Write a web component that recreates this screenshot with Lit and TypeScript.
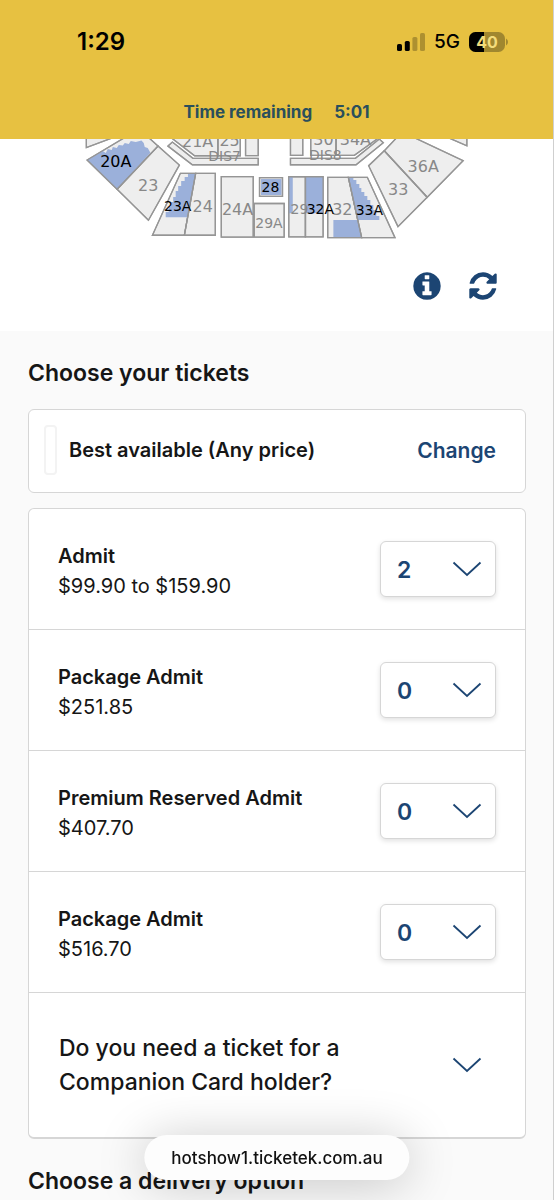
import { LitElement, html, css, svg } from "lit";
import { customElement, property, state } from "lit/decorators.js";

interface TicketType {
  id: string;
  name: string;
  price: string;
  quantity: number;
}

const chevron = html`<svg class="chevron" viewBox="0 0 30 16" aria-hidden="true">
  <path d="M1.5 1.5 15 14 28.5 1.5" fill="none" stroke="currentColor" stroke-width="1.8" />
</svg>`;

@customElement("status-bar")
class StatusBar extends LitElement {
  static styles = css`
    :host {
      display: flex;
      justify-content: space-between;
      align-items: center;
      height: 28px;
      padding: 28px 45px 0 77px;
      color: #000;
    }
    .time {
      font-size: 24px;
      line-height: 28px;
      font-weight: 600;
    }
    .indicators {
      display: flex;
      align-items: center;
      gap: 9px;
      font-size: 19px;
      line-height: 28px;
      font-weight: 500;
    }
    .signal {
      width: 28px;
      height: 18px;
    }
    .battery {
      width: 39px;
      height: 20px;
      font-weight: 700;
    }
  `;

  render() {
    return html`
      <span class="time">1:29</span>
      <span class="indicators">
        <svg class="signal" viewBox="0 0 28 18" aria-label="Signal">
          <rect x="0" y="11" width="5" height="7" rx="1.6" />
          <rect x="7.8" y="8" width="5" height="10" rx="1.6" />
          <rect x="15.4" y="4" width="5" height="14" rx="1.6" opacity=".25" />
          <rect x="23" y="0" width="5" height="18" rx="1.6" opacity=".25" />
        </svg>
        <span>5G</span>
        <svg class="battery" viewBox="0 0 39 20" aria-label="Battery">
          <defs><clipPath id="shell"><rect width="36" height="20" rx="6.5" /></clipPath></defs>
          <g clip-path="url(#shell)">
            <rect width="36" height="20" fill="#a0872f" />
            <rect width="15" height="20" />
          </g>
          <path d="M37 6.500q2 1 2 3.500t-2 3.500z" fill="#a0872f" />
          <text x="18" y="16" text-anchor="middle" font-size="16" fill="#f3dc7c">40</text>
        </svg>
      </span>
    `;
  }
}

@customElement("seat-map")
class SeatMap extends LitElement {
  static styles = css`
    :host {
      display: block;
    }
    .map {
      display: block;
      width: 100%;
      height: 111px;
    }
    .seat {
      fill: #eee;
      stroke: #a0a0a0;
      stroke-width: 1.3;
    }
    .open {
      fill: #9bb0da;
    }
    .edge {
      fill: none;
      stroke: #959595;
      stroke-width: 1.3;
    }
    .label {
      font-family: "DejaVu Sans", sans-serif;
      font-size: 16px;
      fill: #888;
      text-anchor: middle;
    }
    .small {
      font-size: 14px;
    }
    .on {
      fill: #000;
    }
  `;

  private sections = [
    "86.500,138 86.500,147.500 112,138",
    "87.300,160 124,138 149.500,138 158.300,146 117.300,189.300",
    "158.300,146 179.700,165 148.700,220.300 117.300,189.300",
    "168.300,146 172.700,142 193.300,158.300 258.700,158.300 258.700,164.700 192.700,164.700",
    "172,138 195,155.700 218.300,155.700 218.300,138",
    "218.300,138 218.300,155.700 240.700,155.700 240.700,138",
    "246,138 246,155.500 258.700,155.500 258.700,138",
    "180.700,173.300 196,173.300 184.700,235.300 152.700,235.300",
    "196,173.300 215.700,173.300 215.700,235.300 184.700,235.300",
    "221.700,176.500 253.700,176.500 253.700,237.300 221.700,237.300",
    "260,177.500 283,177.500 283,196.300 260,196.300",
    "254.700,203.500 284.700,203.500 284.700,237.300 254.700,237.300",
    "289.300,176.700 306,176.700 306,237 289.300,237",
    "306,176.700 323.700,176.700 323.700,237 306,237",
    "328.300,177.300 349,177.300 362.300,237.700 328.300,237.700",
    "349,177.300 368,177.300 395.700,237.700 362.300,237.700",
    "385,150.700 428,197.300 398.700,226.700 369.300,165.700",
    "397,138 416,138 464,160.700 428,197.300 385,150.700",
    "450,138 467.700,145.700 467.700,138",
    "291,138 291,155.300 303.300,155.300 303.300,138",
    "291,158.300 356,158.300 380,139 384,142.700 356.700,164.700 291,164.700",
    "311.300,138 311.300,155.300 336.700,155.300 336.700,138",
    "336.700,138 336.700,155.300 355,155.300 379,138",
  ];

  private available = [
    "87.300,160 103,151 106,153 108,149 112,150 113,147 117,148 119,145 123,145.500 125,143 129,144 131,141 136,142 141.700,140.500 144,143 145,147 148,148 150.700,152.700 117.300,189.300",
    "188.300,173.300 196,173.300 187.500,217.300 166,217.300 166,212 169,212 169,207 171,207 171,202 173.500,202 173.500,197 176,197 176,191 178.500,191 178.500,186 181.500,186 181.500,181 185,181 185,177 188.300,177",
    "261.500,179 282,179 282,195 261.500,195",
    "289.300,176.700 293.300,176.700 293.300,213.300 289.300,213.300",
    "306.500,176.700 323.700,176.700 323.700,213.300 306.500,213.300",
    "334,220 358.500,220 362.300,237.700 334,237.700",
    "349,177.300 354,177.300 354,180 357,180 357,184 360,184 360,188 362,188 362,192 365,192 365,196 368,196 368,200 371,200 371,205 374,205 374,210 377,210 377,216 380,216 380,220 358.500,220",
  ];

  private labels: [string, number, number, string][] = [
    ["21A", 198, 147, ""],
    ["25", 230, 146, ""],
    ["DIS7", 225, 161, "small"],
    ["30", 324, 145, ""],
    ["34A", 356, 145, ""],
    ["DIS8", 326, 160, "small"],
    ["20A", 116, 166.5, "on"],
    ["23", 148.500, 191, ""],
    ["23A", 178, 211, "on small"],
    ["24", 203, 212, ""],
    ["24A", 238, 215, ""],
    ["28", 271, 192, "on small"],
    ["29A", 269.500, 228, "small"],
    ["29", 300, 214, "small"],
    ["32", 343, 215, ""],
    ["32A", 321, 214, "on small"],
    ["33A", 370, 215, "on small"],
    ["33", 399, 195, ""],
    ["36A", 424, 172, ""],
  ];

  render() {
    return html`
      <svg class="map" viewBox="0 139 554 111" role="img" aria-label="Seat map">
        ${this.sections.map((p) => svg`<polygon class="seat" points=${p} />`)}
        ${this.available.map((p) => svg`<polygon class="open" points=${p} />`)}
        ${this.sections.map((p) => svg`<polygon class="edge" points=${p} />`)}
        ${this.labels.map(
          ([text, x, y, kind]) => svg`<text class="label ${kind}" x=${x} y=${y}>${text}</text>`
        )}
      </svg>
    `;
  }
}

@customElement("ticket-row")
class TicketRow extends LitElement {
  @property({ attribute: false }) ticket!: TicketType;

  static styles = css`
    :host {
      display: flex;
      align-items: center;
      justify-content: space-between;
      padding: 28px 29px;
      border-bottom: 1px solid #d6d6d6;
    }
    .label {
      display: block;
      padding-top: 4px;
      font-size: 20px;
      line-height: 30px;
    }
    .name {
      display: block;
      font-weight: 600;
    }
    .price {
      display: block;
    }
    .picker {
      display: grid;
      align-items: center;
      width: 116px;
      color: #1c4573;
    }
    .quantity {
      grid-area: 1 / 1;
      appearance: none;
      box-sizing: border-box;
      width: 100%;
      height: 56px;
      padding: 2px 16px 0;
      border: 1px solid #d6d6d6;
      border-radius: 6px;
      background: #fff;
      box-shadow: 0 2px 5px rgba(0, 0, 0, 0.12);
      color: inherit;
      font: inherit;
      font-size: 23px;
      font-weight: 600;
    }
    .chevron {
      grid-area: 1 / 1;
      justify-self: end;
      width: 30px;
      height: 16px;
      margin-right: 14px;
      pointer-events: none;
    }
  `;

  render() {
    const { id, name, price, quantity } = this.ticket;
    return html`
      <label class="label" for=${id}>
        <span class="name">${name}</span>
        <span class="price">${price}</span>
      </label>
      <span class="picker">
        <select class="quantity" id=${id}>
          ${[0, 1, 2, 3, 4].map((n) => html`<option ?selected=${n === quantity}>${n}</option>`)}
        </select>
        ${chevron}
      </span>
    `;
  }
}

@customElement("app-root")
class AppRoot extends LitElement {
  @state() private tickets: TicketType[] = [
    { id: "admit", name: "Admit", price: "$99.90 to $159.90", quantity: 2 },
    { id: "package-a", name: "Package Admit", price: "$251.85", quantity: 0 },
    { id: "premium", name: "Premium Reserved Admit", price: "$407.70", quantity: 0 },
    { id: "package-b", name: "Package Admit", price: "$516.70", quantity: 0 },
  ];

  static styles = css`
    :host {
      display: block;
      box-sizing: border-box;
      min-height: 100vh;
      border-right: 1px solid #cfcfcf;
      background: #fafafa;
      color: #161616;
      font-family: Inter, sans-serif;
    }
    .top {
      background: #e7c141;
    }
    .timer {
      display: flex;
      justify-content: center;
      gap: 22px;
      padding: 44px 0 15px;
      color: #2a4f5c;
      font-size: 17px;
      line-height: 24px;
      font-weight: 700;
    }
    .venue {
      background: #fff;
      padding-bottom: 29px;
    }
    .tools {
      display: flex;
      justify-content: flex-end;
      gap: 24px;
      padding: 20px 54px 0 0;
    }
    .tool {
      display: flex;
      padding: 0;
      border: 0;
      background: none;
      color: #1c4573;
    }
    .icon {
      width: 32px;
      height: 32px;
    }
    .content {
      padding: 24px 27px 0 28px;
    }
    .heading {
      margin: 0;
      font-size: 23px;
      line-height: 36px;
      font-weight: 600;
    }
    .card {
      border: 1px solid #d6d6d6;
      border-radius: 6px;
      background: #fff;
    }
    .choice {
      display: flex;
      align-items: center;
      gap: 12px;
      margin: 18px 0 15px;
      padding: 15px 29px 17px 15px;
    }
    .swatch {
      box-sizing: border-box;
      width: 13px;
      height: 50px;
      border: 2px solid #f3f3f3;
      border-radius: 4px;
    }
    .best {
      flex: 1;
      font-size: 20px;
      line-height: 30px;
      font-weight: 600;
    }
    .change {
      padding: 2px 0 0;
      border: 0;
      background: none;
      color: #1c4573;
      font: inherit;
      font-size: 21px;
      line-height: 30px;
      font-weight: 600;
    }
    .list {
      border-bottom-width: 2px;
      margin-bottom: 24px;
    }
    .companion {
      display: flex;
      align-items: center;
      justify-content: space-between;
      box-sizing: border-box;
      width: 100%;
      padding: 38px 43px 38px 30px;
      border: 0;
      background: none;
      color: inherit;
      font: inherit;
      font-size: 23px;
      line-height: 34px;
      font-weight: 500;
      text-align: left;
    }
    .question {
      max-width: 300px;
    }
    .chevron {
      width: 30px;
      height: 16px;
      color: #1c4573;
    }
    .address {
      position: fixed;
      bottom: 20px;
      left: 50%;
      transform: translateX(-50%);
      padding: 8px 27px 7px;
      border-radius: 23px;
      background: #fdfdfd;
      box-shadow: 0 4px 50px rgba(0, 0, 0, 0.22);
      color: #111;
      font-size: 17px;
      line-height: 30px;
      font-weight: 500;
      white-space: nowrap;
    }
  `;

  render() {
    return html`
      <header class="top">
        <status-bar></status-bar>
        <div class="timer"><span>Time remaining</span><span>5:01</span></div>
      </header>
      <section class="venue">
        <seat-map></seat-map>
        <div class="tools">
          <button class="tool" aria-label="Information">
            <svg class="icon" viewBox="0 0 1792 1792" fill="currentColor">
              <path
                d="M1152 1376v-160q0-14-9-23t-23-9h-96v-512q0-14-9-23t-23-9h-320q-14 0-23 9t-9 23v160q0 14 9 23t23 9h96v320h-96q-14 0-23 9t-9 23v160q0 14 9 23t23 9h448q14 0 23-9t9-23zm-128-896v-160q0-14-9-23t-23-9h-192q-14 0-23 9t-9 23v160q0 14 9 23t23 9h192q14 0 23-9t9-23zm640 416q0 209-103 385.500t-279.500 279.500-385.500 103-385.500-103-279.500-279.500-103-385.500 103-385.500 279.500-279.500 385.500-103 385.500 103 279.500 279.500 103 385.500z"
              />
            </svg>
          </button>
          <button class="tool" aria-label="Refresh">
            <svg class="icon" viewBox="0 0 1792 1792" fill="currentColor">
              <path
                d="M1639 1056q0 5-1 7-64 268-268 434.500t-478 166.500q-146 0-282.500-55t-243.500-157l-129 129q-19 19-45 19t-45-19-19-45v-448q0-26 19-45t45-19h448q26 0 45 19t19 45-19 45l-137 137q71 66 161 102t187 36q134 0 250-65t186-179q11-17 53-117 8-23 30-23h192q13 0 22.500 9.500t9.500 22.500zm25-800v448q0 26-19 45t-45 19h-448q-26 0-45-19t-19-45 19-45l138-138q-148-137-349-137-134 0-250 65t-186 179q-11 17-53 117-8 23-30 23h-199q-13 0-22.500-9.500t-9.500-22.500v-7q65-268 270-434.500t480-166.500q146 0 284 55.500t245 156.500l130-129q19-19 45-19t45 19 19 45z"
              />
            </svg>
          </button>
        </div>
      </section>
      <main class="content">
        <h2 class="heading">Choose your tickets</h2>
        <div class="card choice">
          <span class="swatch"></span>
          <span class="best">Best available (Any price)</span>
          <button class="change">Change</button>
        </div>
        <div class="card list">
          ${this.tickets.map((t) => html`<ticket-row .ticket=${t}></ticket-row>`)}
          <button class="companion" aria-expanded="false">
            <span class="question">Do you need a ticket for a Companion Card holder?</span>
            ${chevron}
          </button>
        </div>
        <h2 class="heading">Choose a delivery option</h2>
      </main>
      <div class="address">hotshow1.ticketek.com.au</div>
    `;
  }
}
